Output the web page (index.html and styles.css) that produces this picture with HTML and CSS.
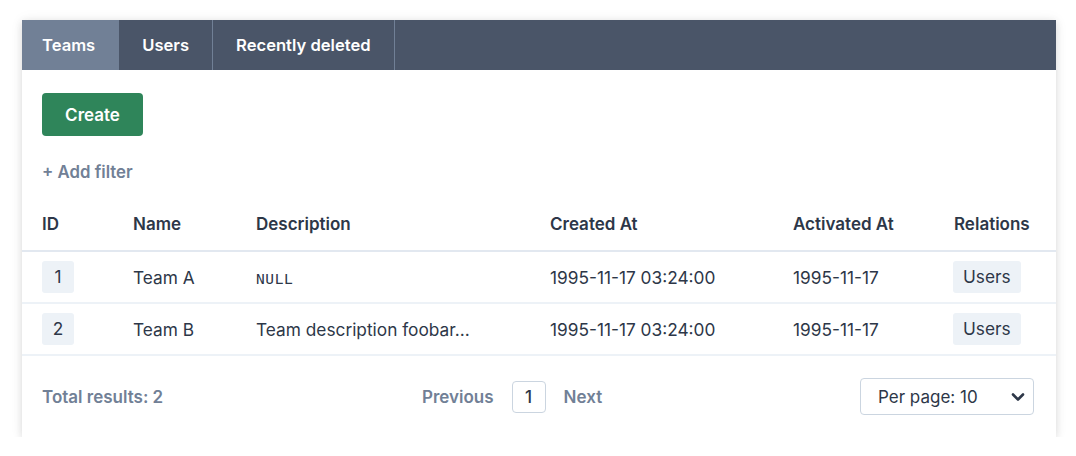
FILE: index.html
```html
<!DOCTYPE html>
<html>
<head>
<meta charset="utf-8">
<link rel="stylesheet" href="styles.css">
</head>
<body>
<div class="card">
  <nav class="tabs">
    <a class="tab active">Teams</a>
    <a class="tab">Users</a>
    <a class="tab">Recently deleted</a>
  </nav>
  <div class="toolbar">
    <button class="btn-create">Create</button>
    <div class="add-filter">+ Add filter</div>
  </div>
  <table class="grid">
    <colgroup>
      <col class="c-id"><col class="c-name"><col class="c-desc"><col class="c-created"><col class="c-activated"><col class="c-rel">
    </colgroup>
    <thead>
      <tr><th>ID</th><th>Name</th><th>Description</th><th>Created At</th><th>Activated At</th><th>Relations</th></tr>
    </thead>
    <tbody>
      <tr>
        <td><span class="pill id">1</span></td>
        <td>Team A</td>
        <td><span class="null">NULL</span></td>
        <td>1995-11-17 03:24:00</td>
        <td>1995-11-17</td>
        <td><span class="pill">Users</span></td>
      </tr>
      <tr>
        <td><span class="pill id">2</span></td>
        <td>Team B</td>
        <td>Team description foobar...</td>
        <td>1995-11-17 03:24:00</td>
        <td>1995-11-17</td>
        <td><span class="pill">Users</span></td>
      </tr>
    </tbody>
  </table>
  <div class="footer">
    <div class="total">Total results: 2</div>
    <div class="pager">
      <span class="pg-link">Previous</span>
      <span class="pg-num">1</span>
      <span class="pg-link">Next</span>
    </div>
    <div class="select">
      <span>Per page: 10</span>
      <svg class="chev" width="14" height="10" viewBox="0 0 14 10"><path d="M2 2.5 L7 7.5 L12 2.5" fill="none" stroke="#2d3748" stroke-width="2.6" stroke-linecap="round" stroke-linejoin="round"/></svg>
    </div>
  </div>
</div>
</body>
</html>
```
FILE: styles.css
```css
* { box-sizing: border-box; }
html, body { margin: 0; padding: 0; background: #ffffff; }
body {
  padding: 20px 20px 0 22px;
  font-family: Inter, "Liberation Sans", sans-serif;
  color: #2d3748;
  font-size: 17px;
}
.card {
  width: 1034px;
  background: #fff;
  box-shadow: 0 2px 8px rgba(0,0,0,0.12), 0 0 14px rgba(0,0,0,0.05);
}
.tabs {
  display: flex;
  height: 50px;
  background: #4a5568;
}
.tab {
  display: flex;
  align-items: center;
  padding: 0 23px;
  color: #fff;
  font-weight: 600;
  font-size: 16.6px;
  border-right: 1px solid #718096;
}
.tab.active { background: #718096; padding-left: 20px; }
.toolbar { padding: 23px 20px 0 20px; }
.btn-create {
  width: 101px;
  height: 43px;
  border: none;
  border-radius: 4px;
  background: #2f855a;
  color: #fff;
  font-family: inherit;
  font-size: 17px;
  font-weight: 600;
  padding: 0;
}
.add-filter {
  margin-top: 25px;
  color: #718096;
  font-weight: 600;
  font-size: 16.8px;
  line-height: 22px;
}
.grid {
  margin-top: 14px;
  width: 1034px;
  border-collapse: collapse;
  table-layout: fixed;
}
.c-id { width: 91px; }
.c-name { width: 123px; }
.c-desc { width: 294px; }
.c-created { width: 243px; }
.c-activated { width: 161px; }
.c-rel { width: 122px; }
.grid th {
  text-align: left;
  font-weight: 600;
  padding: 0 0 0 20px;
  height: 54px;
  border-bottom: 2px solid #e2e8f0;
}
.grid td {
  padding: 0 0 0 20px;
  height: 52px;
  border-bottom: 2px solid #edf2f7;
  white-space: nowrap;
  font-size: 17.3px;
}
.pill {
  display: inline-block;
  background: #edf2f7;
  border-radius: 3px;
  height: 32px;
  line-height: 32px;
  padding: 0 10px;
}
.pill.id { width: 32px; padding: 0; text-align: center; }
.grid td:last-child .pill { margin-left: -1px; }
.null {
  font-family: "DejaVu Sans Mono", "Liberation Mono", monospace;
  font-size: 14.5px;
  letter-spacing: 0.6px;
}
.footer {
  display: flex;
  align-items: center;
  height: 81px;
  padding: 0 22px 0 20px;
}
.total {
  color: #718096;
  font-weight: 600;
  width: 380px;
}
.pager {
  display: flex;
  align-items: center;
  gap: 18px;
}
.pg-link { color: #718096; font-weight: 600; }
.pg-num {
  width: 34px;
  height: 32px;
  border: 1px solid #cbd5e0;
  border-radius: 4px;
  display: flex;
  align-items: center;
  justify-content: center;
  font-weight: 500;
}
.select {
  margin-left: auto;
  width: 174px;
  height: 37px;
  border: 1px solid #cbd5e0;
  border-radius: 4px;
  display: flex;
  align-items: center;
  justify-content: space-between;
  padding: 0 8px 0 17px;
}
.chev { display: block; }
```
